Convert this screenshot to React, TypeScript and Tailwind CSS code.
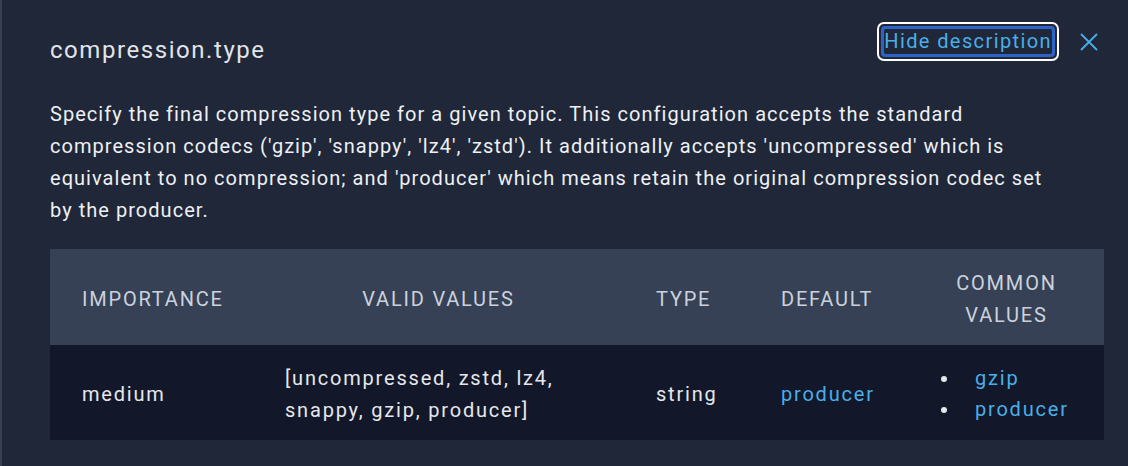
const font = { fontFamily: "Roboto, 'Noto Sans', sans-serif" };

const cols = "grid grid-cols-[203px_371px_125px_160px_195px] items-center";

export default function App() {
  return (
    <div
      className="h-[466px] w-[1128px] overflow-hidden border-l-2 border-[#363f52] bg-[#1f2738] tracking-[0.065em] text-[#e5e7eb]"
      style={font}
    >
      <div className="pl-[48px] pr-[24px] pt-[22px]">
        {/* Header row */}
        <div className="flex items-start justify-between">
          <h1 className="mt-[12px] text-[24px] leading-[32px] tracking-[0.065em] text-[#e2e4ea]">
            compression.type
          </h1>
          <div className="mr-[6px] flex items-center gap-[21px]">
            <button className="rounded-[7px] border-2 border-white p-[2px]">
              <span className="block rounded-[4px] bg-[#2d62c8] p-[3px]">
                <span className="block rounded-[2px] bg-[#1f2738] text-[20px] leading-[25px] tracking-[0.07em] text-[#4aaee8]">
                  Hide description
                </span>
              </span>
            </button>
            <svg width="18" height="18" viewBox="0 0 18 18" className="text-[#4aaee8]">
              <path d="M1 1 L17 17 M17 1 L1 17" stroke="currentColor" strokeWidth="1.8" fill="none" />
            </svg>
          </div>
        </div>

        {/* Description */}
        <p className="mt-[32px] pr-[34px] text-[20px] leading-[32px] text-[#eef0f4]">
          Specify the final compression type for a given topic. This configuration accepts the
          standard compression codecs ('gzip', 'snappy', 'lz4', 'zstd'). It additionally accepts
          'uncompressed' which is equivalent to no compression; and 'producer' which means retain
          the original compression codec set by the producer.
        </p>

        {/* Table */}
        <div className="mt-[23px] w-[1054px] text-[20px] leading-[32px]">
          <div className={`${cols} h-[96px] bg-[#364156] pt-[3px] uppercase tracking-[0.09em] text-[#cbd2dc]`}>
            <div className="px-[32px]">Importance</div>
            <div className="px-[32px] text-center">Valid values</div>
            <div className="px-[32px]">Type</div>
            <div className="px-[32px]">Default</div>
            <div className="px-[32px] text-center">
              Common
              <br />
              values
            </div>
          </div>
          <div className={`${cols} h-[95px] bg-[#121829] pt-[3px] tracking-[0.09em]`}>
            <div className="px-[32px]">medium</div>
            <div className="px-[32px]">
              [uncompressed, zstd, lz4,
              <br />
              snappy, gzip, producer]
            </div>
            <div className="px-[32px]">string</div>
            <div className="px-[32px] text-[#4aaee8]">producer</div>
            <div className="pl-[32px]">
              <ul className="leading-[31px] text-[#4aaee8]">
                {["gzip", "producer"].map((v) => (
                  <li key={v} className="flex items-center">
                    <span className="mr-[28px] h-[6px] w-[6px] rounded-full bg-[#e5e7eb]" />
                    {v}
                  </li>
                ))}
              </ul>
            </div>
          </div>
        </div>
      </div>
    </div>
  );
}
